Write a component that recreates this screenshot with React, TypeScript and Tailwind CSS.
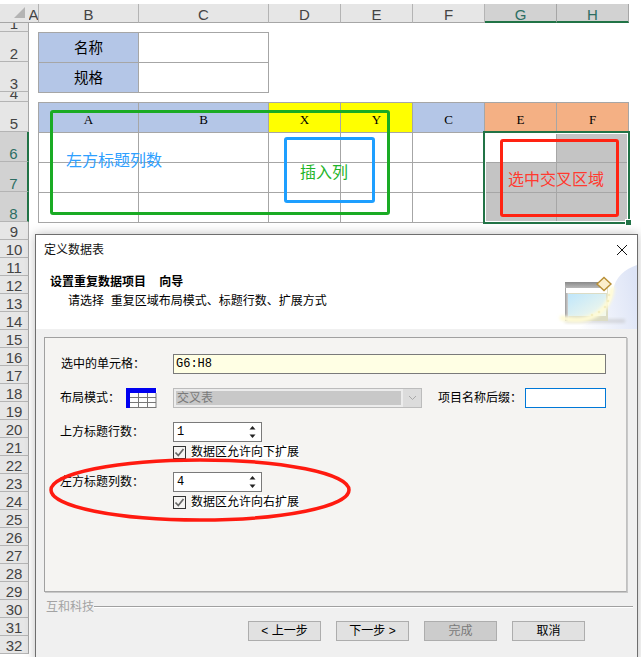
const FONT = "font-['Liberation_Sans','Noto_Sans_CJK_SC',sans-serif]";
const MONO = "font-['Liberation_Mono','Noto_Sans_CJK_SC',monospace]";
const SERIF = "font-['Liberation_Serif','Noto_Sans_CJK_SC',serif]";

const columns = [
  { name: "A", width: "w-[10px]" },
  { name: "B", width: "w-[100px]" },
  { name: "C", width: "w-[130px]" },
  { name: "D", width: "w-[72px]" },
  { name: "E", width: "w-[72px]" },
  { name: "F", width: "w-[72px]" },
  { name: "G", width: "w-[72px]", selected: true },
  { name: "H", width: "w-[72px]", selected: true },
];

const rowHeights = [9, 30, 30, 10, 30, 30, 30, 30, 18, ...Array(23).fill(18)];

function ColumnHeader() {
  return (
    <div className="flex h-[19px]">
      <div className="relative h-full w-[29px] border-b border-[#a6a6a6] bg-[#e6e6e6]">
        <div className="absolute bottom-[4px] right-[4px] h-0 w-0 border-b-[11px] border-l-[11px] border-b-[#b4b4b4] border-l-transparent" />
      </div>
      {columns.map((c) => (
        <div
          key={c.name}
          className={`${c.width} flex items-center justify-center overflow-hidden border-r pt-[3px] text-[15px] leading-none ${
            c.selected
              ? "border-b-2 border-r-[#a6a6a6] border-b-[#217346] bg-[#d2d2d2] text-[#2d6e63]"
              : "border-b border-r-[#b4b4b4] border-b-[#a6a6a6] bg-[#e6e6e6] text-[#444]"
          }`}
        >
          {c.name}
        </div>
      ))}
    </div>
  );
}

function RowHeader() {
  return (
    <div className="w-[29px] shrink-0">
      {rowHeights.map((h, i) => {
        const selected = i >= 5 && i <= 7;
        return (
          <div
            key={i}
            style={{ height: h }}
            className={`flex items-end justify-center overflow-hidden border-b text-[15px] leading-[14px] ${
              selected
                ? "border-r-2 border-b-[#b4b4b4] border-r-[#217346] bg-[#d2d2d2] text-[#2d6e63]"
                : "border-r border-b-[#b4b4b4] border-r-[#a6a6a6] bg-[#e6e6e6] text-[#444]"
            }`}
          >
            {i + 1}
          </div>
        );
      })}
    </div>
  );
}

function Cell({ className = "", children }: { className?: string; children?: React.ReactNode }) {
  return (
    <div className={`-ml-px -mt-px flex items-center justify-center border border-[#a6a6a6] ${className}`}>
      {children}
    </div>
  );
}

function Sheet() {
  const heads = [
    { t: "A", c: "bg-[#b4c6e7]" },
    { t: "B", c: "bg-[#b4c6e7]" },
    { t: "X", c: "bg-[#ffff00]" },
    { t: "Y", c: "bg-[#ffff00]" },
    { t: "C", c: "bg-[#b4c6e7]" },
    { t: "E", c: "bg-[#f4b084]" },
    { t: "F", c: "bg-[#f4b084]" },
  ];
  return (
    <div className="relative ml-[10px] pt-[10px]">
      <div className="grid w-[230px] grid-cols-[100px_130px] grid-rows-[30px_30px] text-[14.5px] text-black">
        <Cell className="bg-[#b4c6e7] pt-[2px]">名称</Cell>
        <Cell className="bg-white" />
        <Cell className="bg-[#b4c6e7] pt-[2px]">规格</Cell>
        <Cell className="bg-white" />
      </div>
      <div className={`mt-[10px] grid w-[590px] grid-cols-[100px_130px_72px_72px_72px_72px_72px] grid-rows-[30px_30px_30px_30px] text-[13px] text-black ${SERIF}`}>
        {heads.map((h) => (
          <Cell key={h.t} className={`${h.c} pt-[4px]`}>
            {h.t}
          </Cell>
        ))}
        {Array.from({ length: 21 }).map((_, i) => {
          const grey = i === 6 || (i >= 12 && i <= 13) || i >= 19;
          return <Cell key={i} className={grey ? "border-[#808080] bg-[#c4c4c4]" : "bg-white"} />;
        })}
      </div>
    </div>
  );
}

function Annotations() {
  return (
    <>
      {/* green box */}
      <div className="absolute left-[50px] top-[110px] h-[105px] w-[340px] rounded-[3px] border-[3px] border-[#1aab24]" />
      <div className="absolute left-[66px] top-[151px] text-[16px] leading-[20px] text-[#2ea0ff]">左方标题列数</div>
      {/* blue box */}
      <div className="absolute left-[284px] top-[137px] h-[66px] w-[91px] rounded-[3px] border-[3px] border-[#1e9fff]" />
      <div className="absolute left-[300px] top-[163px] text-[16px] leading-[20px] text-[#1fb52a]">插入列</div>
      {/* selection */}
      <div className="absolute left-[483px] top-[131px] h-[93px] w-[147px] border-[2px] border-[#217346] shadow-[inset_0_0_0_1px_#ffffff]" />
      <div className="absolute left-[625px] top-[219px] h-[7px] w-[7px] border border-white bg-[#217346]" />
      {/* red box */}
      <div className="absolute left-[500px] top-[139px] h-[78px] w-[119px] rounded-[3px] border-[3px] border-[#ff2312]" />
      <div className="absolute left-[508px] top-[170px] text-[16px] leading-[20px] text-[#ff3b30]">选中交叉区域</div>
    </>
  );
}

function Spinner({ value }: { value: string }) {
  return (
    <div className={`flex h-[20px] w-[89px] items-center justify-between border border-[#7a7a7a] bg-white pl-[3px] pr-[5px] text-[12px] leading-none text-black ${MONO}`}>
      <span>{value}</span>
      <svg width="7" height="14" viewBox="0 0 7 14" fill="#222">
        <path d="M3.5 1 L6.5 4.5 H0.5 Z" />
        <path d="M0.5 9.5 H6.5 L3.5 13 Z" />
      </svg>
    </div>
  );
}

function Check({ label }: { label: string }) {
  return (
    <div className="flex h-[14px] items-center gap-[5px]">
      <div className="flex h-[13px] w-[13px] items-center justify-center border border-[#333] bg-[#f5f4f2]">
        <svg width="11" height="11" viewBox="0 0 11 11" fill="none" stroke="#666" strokeWidth="1.7">
          <path d="M1.5 5.5 L4.3 8.5 L9.5 2" />
        </svg>
      </div>
      <span className="bg-white text-[12px] leading-[14px] text-black">{label}</span>
    </div>
  );
}

function LayoutIcon() {
  return (
    <svg width="31" height="20" viewBox="0 0 31 20" className="shrink-0">
      <rect width="31" height="20" fill="#fdfdfd" />
      <path d="M0 0 H30 V5 H4 V20 H0 Z" fill="#0000f0" />
      <path d="M4 9.5 H30 M4 14.5 H30 M4 19.5 H30 M12.5 5 V20 M21.5 5 V20 M30 5 V20" fill="none" stroke="#777" strokeWidth="1" />
    </svg>
  );
}

function WizardIcon() {
  const sparks = [
    [58, 32],
    [57, 38],
    [54, 44],
    [48, 49],
    [41, 52],
  ];
  return (
    <svg width="86" height="66" viewBox="0 0 86 66" className="absolute bottom-0 right-0">
      <defs>
        <linearGradient id="wash" x1="0" y1="0.6" x2="1" y2="0.4">
          <stop offset="0" stopColor="#ffffff" />
          <stop offset="1" stopColor="#dde4f6" />
        </linearGradient>
        <linearGradient id="pane" x1="0" y1="0" x2="1" y2="1">
          <stop offset="0" stopColor="#bfe6fb" />
          <stop offset="1" stopColor="#f6f9ea" />
        </linearGradient>
        <linearGradient id="bar" x1="0" y1="0" x2="0" y2="1">
          <stop offset="0" stopColor="#8a8a8a" />
          <stop offset="1" stopColor="#b8b8b8" />
        </linearGradient>
        <linearGradient id="side" x1="0" y1="0" x2="1" y2="0">
          <stop offset="0" stopColor="#9c9c9c" />
          <stop offset="1" stopColor="#e4e4e4" />
        </linearGradient>
        <filter id="soft" x="-30%" y="-30%" width="160%" height="160%">
          <feGaussianBlur stdDeviation="1.6" />
        </filter>
      </defs>
      <path d="M86 2 C74 6 64 14 62 28 C60 44 50 58 22 66 H86 Z" fill="url(#wash)" />
      <rect x="14" y="56" width="60" height="4" fill="#b8b8b8" opacity="0.45" filter="url(#soft)" />
      <rect x="14" y="19" width="43" height="6" fill="url(#bar)" />
      <rect x="14" y="25" width="43" height="33" fill="#dcdcc4" />
      <rect x="14" y="25" width="4" height="33" fill="url(#side)" />
      <rect x="15" y="25" width="41" height="5" fill="#ffffff" />
      <rect x="17" y="31" width="38" height="22" fill="url(#pane)" />
      <path d="M11 55 C36 62 58 50 61 26" fill="none" stroke="#fffbd6" strokeWidth="5" strokeLinecap="round" filter="url(#soft)" />
      {sparks.map(([x, y]) => (
        <path key={x} d={`M${x} ${y - 1.5} L${x + 1.5} ${y} L${x} ${y + 1.5} L${x - 1.5} ${y} Z`} fill="#f3ecbc" />
      ))}
      <path d="M46 21 L53 14.5 L60 21 L53 27.5 Z" fill="#fbeecb" stroke="#b88f36" strokeWidth="1.4" />
    </svg>
  );
}

function Btn({ label, disabled }: { label: string; disabled?: boolean }) {
  return (
    <div
      className={`flex h-[20px] w-[73px] items-center justify-center border border-[#adadad] text-[12px] leading-none ${
        disabled ? "bg-[#cccccc] text-[#7a7a7a]" : "bg-[#e1e1e1] text-black"
      }`}
    >
      {label}
    </div>
  );
}

function Dialog() {
  return (
    <div className="absolute left-[35px] top-[234px] flex h-[430px] w-[603px] flex-col border border-[#6e6e6e] bg-[#f0f0f0] text-[12px] text-black shadow-[0_0_10px_rgba(0,0,0,0.25)]">
      <div className="relative h-[94px] shrink-0 bg-white">
        <div className="pl-[8px] pt-[8px] leading-[14px] text-[#111]">定义数据表</div>
        <svg width="12" height="12" viewBox="0 0 12 12" className="absolute right-[9px] top-[9px]" stroke="#111" fill="none">
          <path d="M1 1 L11 11 M11 1 L1 11" />
        </svg>
        <div className="pl-[14px] pt-[17px] font-bold leading-[16px]">设置重复数据项目&nbsp;&nbsp;&nbsp;&nbsp;向导</div>
        <div className="pl-[32px] pt-[3px] leading-[16px]">请选择&nbsp;&nbsp;重复区域布局模式、标题行数、扩展方式</div>
        <WizardIcon />
      </div>

      <div className="flex-1 px-[8px] pt-[8px]">
        <div className="h-[255px] w-[583px] border border-[#a0a0a0] border-b-[#a8a8a8] border-r-[#c0c0c0] bg-[#f5f4f2] pl-[15px] pt-[16px] shadow-[1px_1px_0_#c8c8c8]">
          <div className="flex h-[20px] items-center">
            <span className="w-[113px] pl-px">选中的单元格：</span>
            <div className={`flex h-[20px] w-[433px] items-center border border-[#7a7a7a] bg-[#ffffe4] pl-[2px] text-[12px] ${MONO}`}>G6:H8</div>
          </div>
          <div className="mt-[14px] flex h-[20px] items-center">
            <span className="w-[66px]">布局模式：</span>
            <LayoutIcon />
            <div className="ml-[16px] flex h-[20px] w-[249px] border border-[#bcbcbc] bg-[#ececec]">
              <div className="m-[2px] flex flex-1 items-center bg-[#c8c8c8] pl-[1px] text-[#7a7a7a]">交叉表</div>
              <div className="flex w-[18px] items-center justify-center bg-[#dcdcdc]">
                <svg width="9" height="6" viewBox="0 0 9 6" fill="none" stroke="#a8a8a8">
                  <path d="M1 1 L4.5 4.5 L8 1" />
                </svg>
              </div>
            </div>
            <span className="ml-[16px] w-[87px]">项目名称后缀：</span>
            <div className="h-[20px] w-[81px] border border-[#0078d7] bg-white" />
          </div>
          <div className="mt-[14px] flex h-[20px] items-center">
            <span className="w-[113px]">上方标题行数：</span>
            <Spinner value="1" />
          </div>
          <div className="mt-[3px] pl-[113px]">
            <Check label="数据区允许向下扩展" />
          </div>
          <div className="mt-[13px] flex h-[20px] items-center">
            <span className="w-[113px]">左方标题列数：</span>
            <Spinner value="4" />
          </div>
          <div className="mt-[3px] pl-[113px]">
            <Check label="数据区允许向右扩展" />
          </div>
        </div>
        <div className="-mr-[4px] mt-[7px] flex items-center pl-[2px]">
          <span className="text-[12px] leading-[16px] text-[#a3a3a3]">互和科技</span>
          <div className="h-[2px] flex-1 border-t border-[#a0a0a0] bg-white" />
        </div>
        <div className="mt-[6px] flex gap-[15px] pl-[204px]">
          <Btn label="< 上一步" />
          <Btn label="下一步 >" />
          <Btn label="完成" disabled />
          <Btn label="取消" />
        </div>
      </div>
    </div>
  );
}

export default function App() {
  return (
    <div className={`relative h-[657px] w-[641px] overflow-hidden bg-white ${FONT}`}>
      <div className="h-[4px]" />
      <ColumnHeader />
      <div className="flex">
        <RowHeader />
        <Sheet />
      </div>
      <Annotations />
      <Dialog />
      <svg width="641" height="657" className="pointer-events-none absolute left-0 top-0">
        <ellipse cx="200" cy="490" rx="149" ry="30" fill="none" stroke="#ff1a10" strokeWidth="3.5" />
      </svg>
    </div>
  );
}
